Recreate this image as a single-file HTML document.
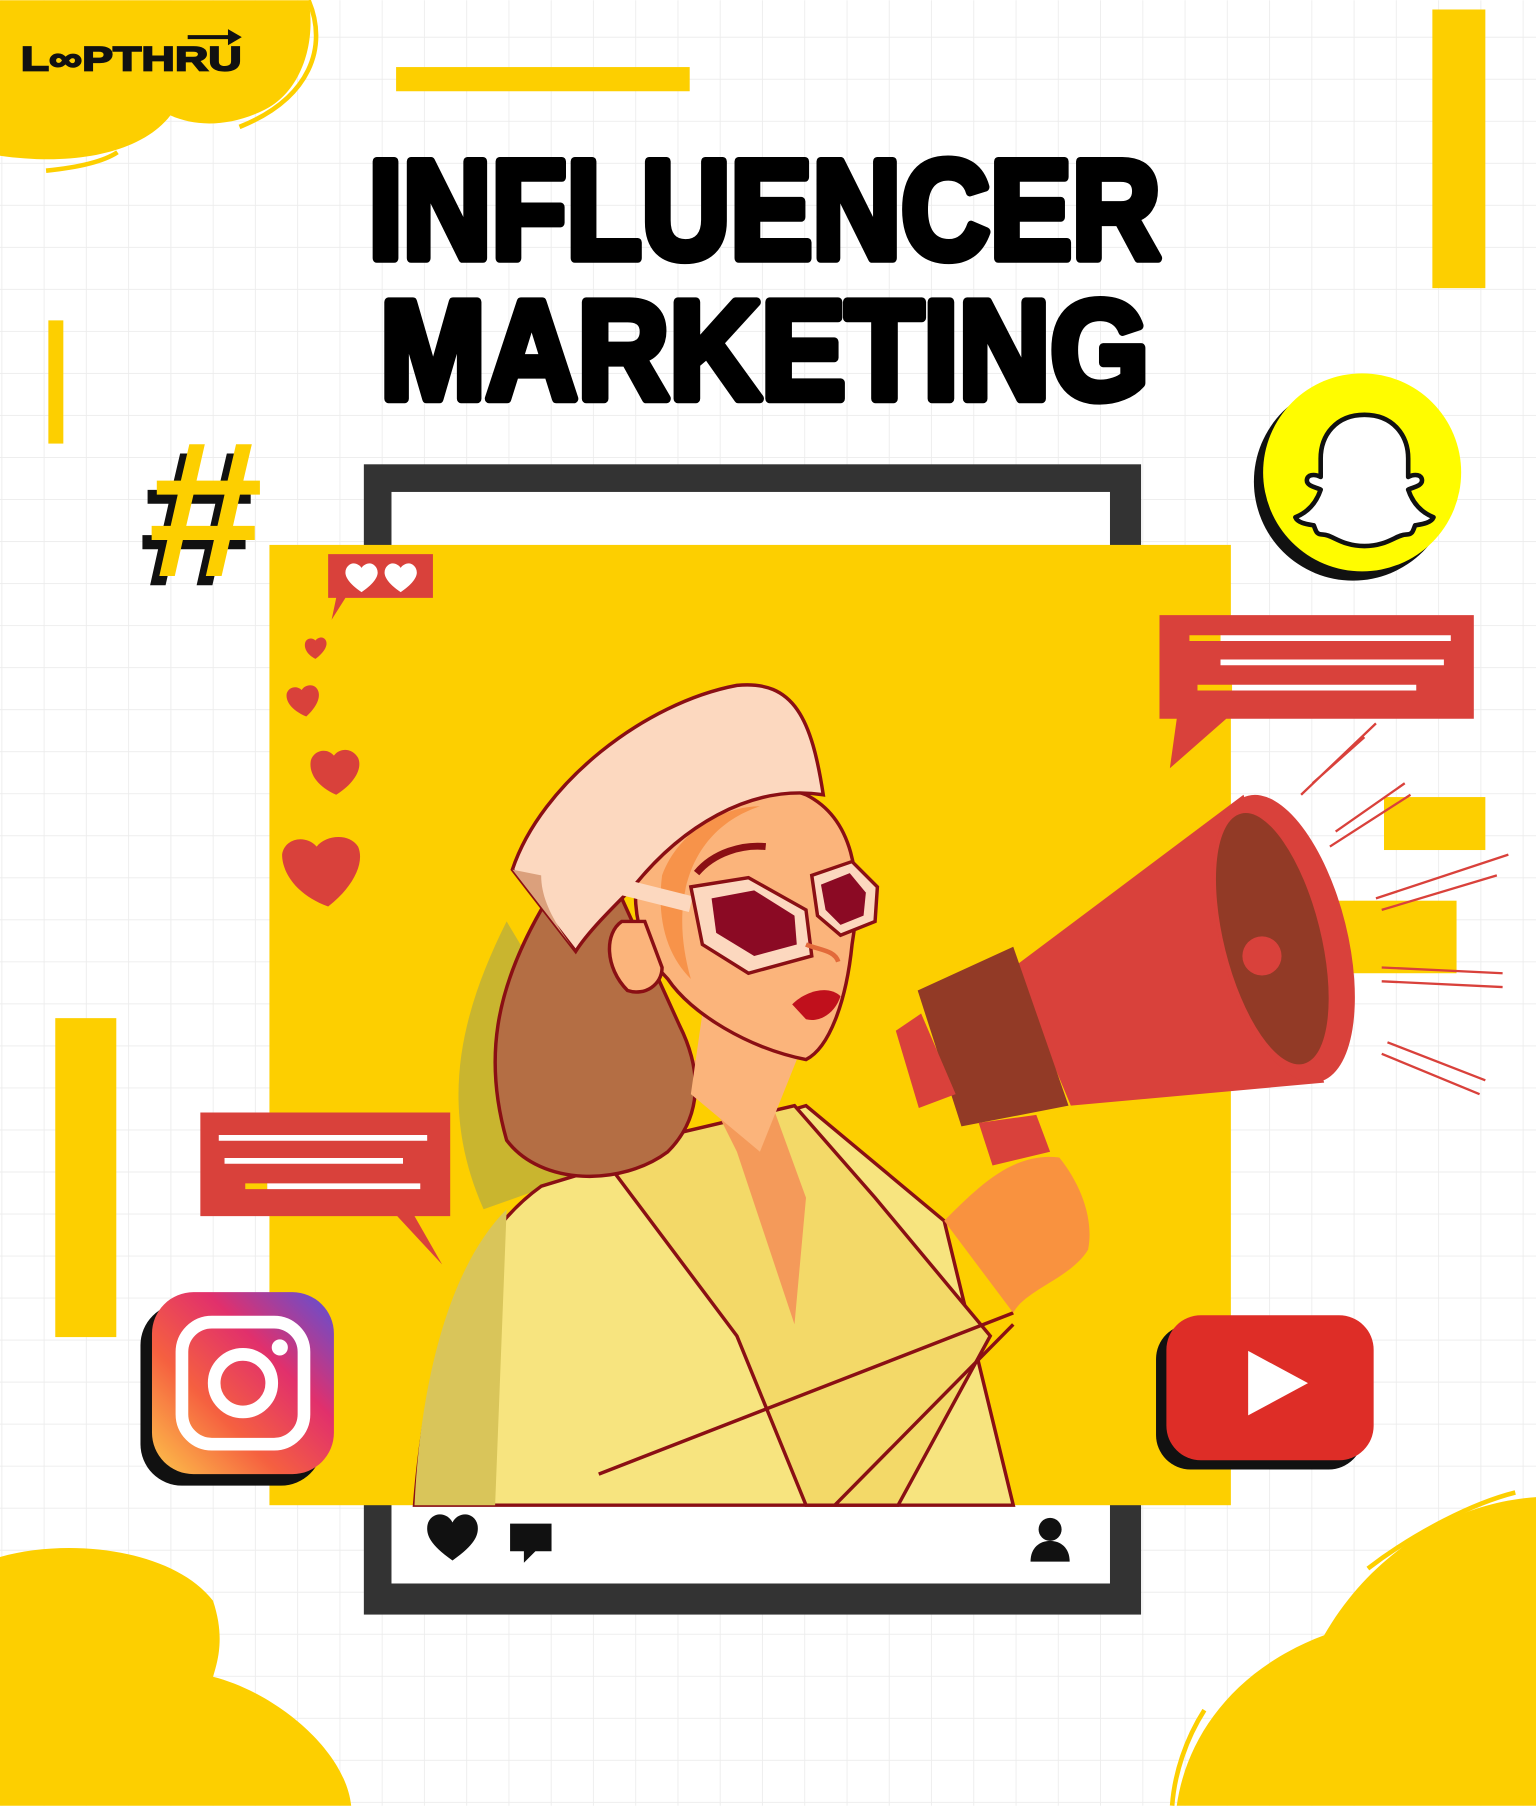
<!DOCTYPE html>
<html><head><meta charset="utf-8"><style>
html,body{margin:0;padding:0;background:#fff;}
svg{display:block;}
</style></head><body>
<svg width="1536" height="1806" viewBox="0 0 1334 1568" xmlns="http://www.w3.org/2000/svg">
<defs>
<pattern id="g" width="36.7" height="36.5" patternUnits="userSpaceOnUse" x="2" y="-4">
<path d="M36.7 0V36.5M0 36.5H36.7" stroke="#ececec" stroke-width="1.5" fill="none"/>
</pattern>
<linearGradient id="ig" x1="0" y1="1" x2="1" y2="0">
<stop offset="0" stop-color="#fdc54a"/><stop offset="0.35" stop-color="#f56040"/><stop offset="0.65" stop-color="#e1306c"/><stop offset="1" stop-color="#5b51d8"/>
</linearGradient>
</defs>
<rect width="1334" height="1568" fill="#fff"/>
<rect width="1334" height="1568" fill="url(#g)"/>

<path d="M0 0H268C275 40 260 80 230 95C200 110 170 110 148 100C125 130 70 145 0 135Z" fill="#fdcf00"/>
<path d="M268 0C285 40 270 85 208 110" stroke="#fdcf00" stroke-width="4" fill="none"/>
<path d="M40 148C70 145 90 140 102 132" stroke="#fdcf00" stroke-width="4" fill="none"/>
<text x="18" y="61" font-family="Liberation Sans,sans-serif" font-weight="900" font-size="30" fill="#111" stroke="#111" stroke-width="1.5" textLength="192" lengthAdjust="spacingAndGlyphs">L∞PTHRU</text>
<path d="M163 32H203" stroke="#111" stroke-width="3.5"/><path d="M198 25L210 32L198 39Z" fill="#111"/>

<rect x="344" y="58" width="255" height="21" fill="#fdcf00"/>
<rect x="1244" y="8" width="46" height="242" fill="#fdcf00"/>
<rect x="42" y="278" width="13" height="107" fill="#fdcf00"/>
<rect x="48" y="884" width="53" height="277" fill="#fdcf00"/>
<rect x="1202" y="692" width="88" height="46" fill="#fdcf00"/>
<rect x="1145" y="782" width="120" height="63" fill="#fdcf00"/>

<text x="320" y="224" font-family="Liberation Sans,sans-serif" font-weight="900" font-size="122" fill="#000" textLength="688" lengthAdjust="spacingAndGlyphs" stroke="#000" stroke-width="8" stroke-linejoin="round">INFLUENCER</text>
<text x="330" y="346" font-family="Liberation Sans,sans-serif" font-weight="900" font-size="122" fill="#000" textLength="668" lengthAdjust="spacingAndGlyphs" stroke="#000" stroke-width="8" stroke-linejoin="round">MARKETING</text>

<text x="118" y="508" font-family="Liberation Sans,sans-serif" font-weight="900" font-size="168" fill="#111" font-style="italic" textLength="100" lengthAdjust="spacingAndGlyphs">#</text>
<text x="126" y="500" font-family="Liberation Sans,sans-serif" font-weight="900" font-size="168" fill="#fdcf00" font-style="italic" textLength="100" lengthAdjust="spacingAndGlyphs">#</text>

<circle cx="1175" cy="418" r="86" fill="#111"/>
<circle cx="1183" cy="410" r="86" fill="#fffc00"/>
<path d="M1185 360c-25 0-38 18-38 38v16c-6-3-12-2-12 3 0 5 8 6 12 8-4 12-12 20-22 24 2 5 10 6 16 7 2 5 2 8 8 8 8 0 16 10 36 10s28-10 36-10c6 0 6-3 8-8 6-1 14-2 16-7-10-4-18-12-22-24 4-2 12-3 12-8 0-5-6-6-12-3v-16c0-20-13-38-38-38z" fill="#fff" stroke="#111" stroke-width="4" stroke-linejoin="round"/>

<rect x="316" y="403" width="675" height="999" fill="#333"/>
<rect x="340" y="427" width="624" height="948" fill="#fff"/>
<rect x="234" y="473" width="835" height="834" fill="#fdcf00"/>
<path d="M393 1355c-20-14-22-22-22-28 0-8 6-12 11-12 5 0 9 3 11 7 2-4 6-7 11-7 5 0 11 4 11 12 0 6-2 14-22 28z" fill="#111"/>
<path d="M443 1323h36v24h-14l-10 10v-10h-12z" fill="#111"/>
<circle cx="912" cy="1328" r="10" fill="#111"/><path d="M895 1356c0-12 8-18 17-18s17 6 17 18z" fill="#111"/>

<path d="M440 800C400 880 380 960 420 1050L560 1000Z" fill="#c9b52f"/>
<path d="M360 1307C370 1180 400 1080 470 1030L700 960L820 1060L880 1307Z" fill="#f7e47f" stroke="#8a0f14" stroke-width="3"/>
<path d="M360 1307C365 1200 390 1100 440 1050L430 1307Z" fill="#d9c55a"/>
<path d="M520 1000L640 1160L700 1307H780L860 1160L760 1040L690 960Z" fill="#f3d968" stroke="#8a0f14" stroke-width="3"/>
<path d="M600 920L640 1000L690 1150L700 1040L660 930Z" fill="#f49a5a"/>
<path d="M520 1280L880 1140" stroke="#8a0f14" stroke-width="3"/>
<path d="M725 1307L880 1150" stroke="#8a0f14" stroke-width="3"/>
<path d="M470 790C430 860 420 920 440 990C470 1030 540 1030 580 1000C610 970 610 930 590 890L540 780Z" fill="#b46e44" stroke="#8a0f14" stroke-width="3"/>
<path d="M610 880L600 950L660 1000L700 900Z" fill="#fbb47b"/>
<path d="M560 730C580 690 650 670 700 690C740 710 750 760 740 820C735 870 720 910 700 920C650 910 600 880 580 850C550 820 545 770 560 730Z" fill="#fbb47b" stroke="#8a0f14" stroke-width="3"/>
<path d="M575 760C590 720 630 700 660 700C600 720 580 780 600 850C580 830 570 800 575 760Z" fill="#f7934a"/>
<path d="M540 800C525 810 525 840 545 860C560 865 575 855 575 840L560 800Z" fill="#fbb47b" stroke="#8a0f14" stroke-width="3"/>
<path d="M445 755C470 680 560 610 640 595C690 590 705 625 715 690C650 680 590 720 550 770C530 790 510 810 500 826Z" fill="#fcd8bf" stroke="#8a0f14" stroke-width="3"/>
<path d="M445 755L500 826C480 800 470 780 470 760Z" fill="#dba07c"/>
<path d="M605 758C620 740 645 733 665 735" stroke="#8a0f14" stroke-width="6" fill="none"/>
<path d="M540 770L600 785" stroke="#fcd8bf" stroke-width="14"/>
<path d="M600 770L650 762L700 790L705 830L650 845L610 820Z" fill="#fcd8bf" stroke="#8a0f14" stroke-width="3"/>
<path d="M618 780L655 773L690 795L692 820L655 830L622 810Z" fill="#8b0a24"/>
<path d="M705 760L740 748L762 770L760 800L730 812L710 795Z" fill="#fcd8bf" stroke="#8a0f14" stroke-width="3"/>
<path d="M713 768L738 758L752 775L750 795L730 803L717 790Z" fill="#8b0a24"/>
<path d="M700 820C712 825 725 825 728 835" stroke="#e26a3a" stroke-width="4" fill="none"/>
<path d="M688 872C700 860 720 855 730 865C725 880 712 888 700 885Z" fill="#c0101c"/>

<path d="M880 840L1080 690L1150 940L930 960Z" fill="#d9413b"/>
<ellipse cx="1115" cy="815" rx="55" ry="128" transform="rotate(-14 1115 815)" fill="#d9413b"/>
<ellipse cx="1105" cy="815" rx="42" ry="112" transform="rotate(-14 1105 815)" fill="#923a26"/>
<circle cx="1096" cy="830" r="17" fill="#d9413b"/>
<path d="M797 860L880 822L928 960L835 978Z" fill="#923a26"/>
<path d="M778 895L800 880L830 950L798 962Z" fill="#d9413b"/>
<path d="M850 975L900 968L912 1000L862 1012Z" fill="#d9413b"/>
<path d="M820 1060C850 1030 880 1000 920 1005C940 1030 950 1060 945 1085C930 1110 890 1120 880 1140Z" fill="#f9923f"/>
<g stroke="#d9413b" stroke-width="2">
<path d="M1130 690L1195 628M1140 680L1185 640M1155 735L1225 690M1160 722L1220 680M1195 780L1310 742M1200 790L1300 760M1200 840L1305 845M1200 852L1305 857M1205 905L1290 938M1200 915L1285 950"/>
</g>

<path d="M1007 534H1280V624H1065L1016 667L1022 624H1007Z" fill="#d9413b"/>
<g stroke="#fff" stroke-width="5"><path d="M1060 554H1260M1060 575H1254M1070 597H1230"/></g>
<g stroke="#fdcf00" stroke-width="5"><path d="M1033 554H1060M1040 597H1070"/></g>
<path d="M174 966H391V1056H360L384 1098L345 1056H174Z" fill="#d9413b"/>
<g stroke="#fff" stroke-width="5"><path d="M190 988H371M195 1008H350M232 1030H365"/></g>
<g stroke="#fdcf00" stroke-width="5"><path d="M213 1030H232"/></g>

<path d="M285 481H376V519H300L288 538L292 519H285Z" fill="#d9413b"/>
<path d="M314 514c-12-8-14-14-14-17 0-5 4-8 7-8 3 0 6 2 7 4 1-2 4-4 7-4 3 0 7 3 7 8 0 3-2 9-14 17zM348 514c-12-8-14-14-14-17 0-5 4-8 7-8 3 0 6 2 7 4 1-2 4-4 7-4 3 0 7 3 7 8 0 3-2 9-14 17z" fill="#fff"/>
<g fill="#d9413b">
<path d="M274 572c-8-4-10-10-9-14 1-4 6-5 9-2 2-3 7-4 9 0 2 4-1 10-9 16z"/>
<path d="M266 622c-14-6-18-14-17-20 2-6 9-7 13-3 3-5 11-6 14 0 3 6-1 15-10 23z"/>
<path d="M292 690c-18-8-24-20-22-30 3-9 14-11 20-4 5-7 16-7 21 2 4 9-3 22-19 32z"/>
<path d="M285 787c-28-10-40-30-40-45 2-14 20-18 30-7 8-10 28-12 36 0 6 14-4 35-26 52z"/>
</g>

<rect x="122" y="1132" width="158" height="158" rx="36" fill="#111"/>
<rect x="132" y="1122" width="158" height="158" rx="36" fill="url(#ig)"/>
<rect x="158" y="1148" width="106" height="106" rx="26" fill="none" stroke="#fff" stroke-width="11"/>
<circle cx="211" cy="1201" r="25" fill="none" stroke="#fff" stroke-width="11"/>
<circle cx="243" cy="1170" r="7" fill="#fff"/>

<rect x="1004" y="1150" width="180" height="126" rx="30" fill="#111"/>
<rect x="1013" y="1142" width="180" height="126" rx="30" fill="#de2d27"/>
<path d="M1084 1173L1136 1201L1084 1229Z" fill="#fff"/>

<path d="M0 1352C60 1335 150 1345 185 1390C195 1420 190 1440 185 1456C240 1470 300 1520 305 1568H0Z" fill="#fdcf00"/>
<path d="M1334 1300V1568H1022C1030 1510 1070 1450 1150 1420C1190 1350 1260 1305 1334 1300Z" fill="#fdcf00"/>
<path d="M1188 1362C1230 1330 1280 1305 1316 1296" stroke="#fdcf00" stroke-width="4" fill="none"/>
<path d="M1046 1485C1030 1510 1020 1540 1018 1568" stroke="#fdcf00" stroke-width="4" fill="none"/>
</svg>
</body></html>
